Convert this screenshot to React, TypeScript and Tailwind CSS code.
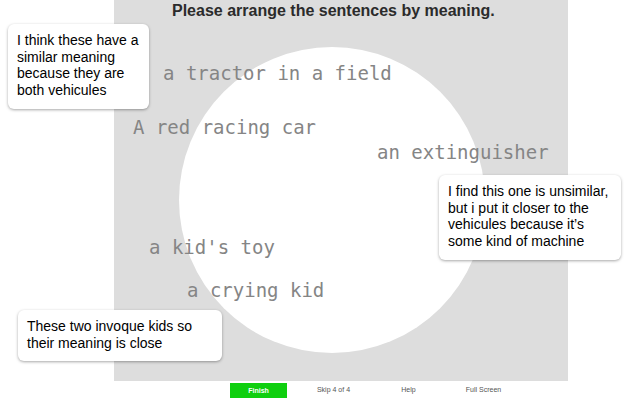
const sentences = [
  { text: 'a tractor in a field', pos: 'left-[49px] top-[64px]' },
  { text: 'A red racing car', pos: 'left-[19px] top-[118px]' },
  { text: 'an extinguisher', pos: 'left-[263px] top-[143px]' },
  { text: "a kid's toy", pos: 'left-[35px] top-[238px]' },
  { text: 'a crying kid', pos: 'left-[73px] top-[281px]' },
];

const notes = [
  {
    text: 'I think these have a similar meaning because they are both vehicules',
    pos: 'left-[8px] top-[24px] w-[141px] h-[85px]',
  },
  {
    text: 'I find this one is unsimilar, but i put it closer to the vehicules because it\u2019s some kind of machine',
    pos: 'left-[439px] top-[175px] w-[182px] h-[85px]',
  },
  {
    text: 'These two invoque kids so their meaning is close',
    pos: 'left-[18px] top-[310px] w-[204px] h-[51px]',
  },
];

export default function App() {
  return (
    <div className="relative w-[635px] h-[404px] overflow-hidden bg-white font-['Liberation_Sans',Arial,sans-serif]">
      {/* Sorting board */}
      <div className="relative ml-[114px] w-[454px] h-[381px] bg-[#dddddd]">
        <h1 className="relative z-10 pl-[58px] pt-[2px] text-[16px] leading-[18px] font-bold text-[#2b2b2b]">
          Please arrange the sentences by meaning.
        </h1>
        <div className="absolute left-[65px] top-[47px] w-[306px] h-[306px] rounded-full bg-white" />
        {sentences.map((s) => (
          <div
            key={s.text}
            className={`absolute ${s.pos} whitespace-pre text-[19px] leading-[19px] text-[#858585] font-['DejaVu_Sans_Mono',monospace]`}
          >
            {s.text}
          </div>
        ))}
      </div>

      {/* Footer controls */}
      <div className="flex items-center h-[18px] pl-[221px] text-[7px] text-[#555]">
        <div className="w-[75px] flex justify-center">
          <button className="w-[57px] h-[15px] bg-[#0fcf0f] text-white font-bold text-[7px] leading-[15px]">
            Finish
          </button>
        </div>
        <div className="w-[75px] text-center">Skip 4 of 4</div>
        <div className="w-[75px] text-center">Help</div>
        <div className="w-[75px] text-center">Full Screen</div>
      </div>

      {/* Annotation callouts */}
      {notes.map((n) => (
        <div
          key={n.text}
          className={`absolute ${n.pos} rounded-[6px] bg-white px-[9px] pt-[8px] text-[14px] leading-[16.7px] text-black shadow-[0_1px_3px_rgba(0,0,0,0.35)]`}
        >
          {n.text}
        </div>
      ))}
    </div>
  );
}
